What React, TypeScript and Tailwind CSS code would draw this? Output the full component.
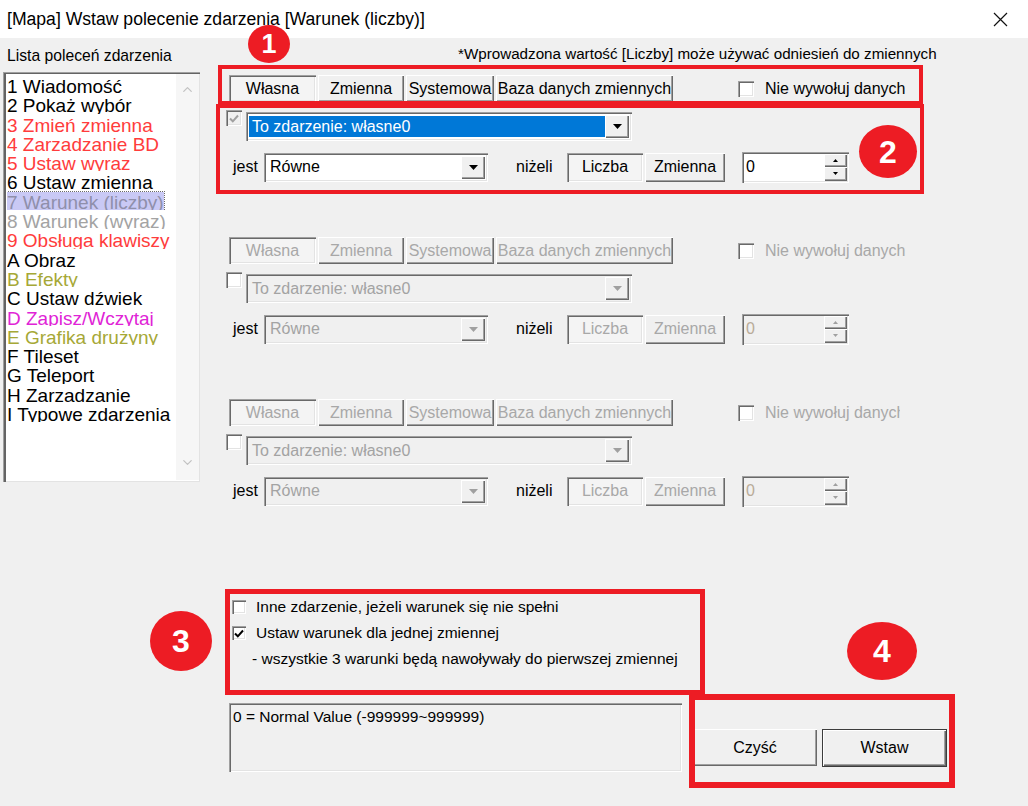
import { ChevronDown, ChevronUp } from 'lucide-react';

const raised =
  'bg-[#f0f0f0] shadow-[inset_1px_1px_0_#ffffff,inset_-1px_-1px_0_#696969,inset_-2px_-2px_0_#a0a0a0]';
const sunken =
  'shadow-[inset_1px_1px_0_#a0a0a0,inset_2px_2px_0_#696969,inset_-1px_-1px_0_#ffffff,inset_-2px_-2px_0_#e3e3e3]';

const commands = [
  { label: '1 Wiadomość', color: 'text-black' },
  { label: '2 Pokaż wybór', color: 'text-black' },
  { label: '3 Zmień zmienna', color: 'text-[#ff3c3c]' },
  { label: '4 Zarzadzanie BD', color: 'text-[#ff3c3c]' },
  { label: '5 Ustaw wyraz', color: 'text-[#ff3c3c]' },
  { label: '6 Ustaw zmienna', color: 'text-black' },
  { label: '7 Warunek (liczby)', color: 'text-[#8f8fab]', selected: true },
  { label: '8 Warunek (wyraz)', color: 'text-[#a3a3a3]' },
  { label: '9 Obsługa klawiszy', color: 'text-[#ff3c3c]' },
  { label: 'A Obraz', color: 'text-black' },
  { label: 'B Efekty', color: 'text-[#a6a836]' },
  { label: 'C Ustaw dźwiek', color: 'text-black' },
  { label: 'D Zapisz/Wczytaj', color: 'text-[#e024d6]' },
  { label: 'E Grafika drużyny', color: 'text-[#a6a836]' },
  { label: 'F Tileset', color: 'text-black' },
  { label: 'G Teleport', color: 'text-black' },
  { label: 'H Zarzadzanie', color: 'text-black' },
  { label: 'I Typowe zdarzenia', color: 'text-black' },
];

function Tri({ disabled, up, w = 9, h = 5 }: { disabled?: boolean; up?: boolean; w?: number; h?: number }) {
  return (
    <svg width={w} height={h} viewBox={`0 0 ${w} ${h}`}>
      <path
        d={up ? `M0 ${h}H${w}L${w / 2} 0z` : `M0 0H${w}L${w / 2} ${h}z`}
        fill={disabled ? '#a0a0a0' : '#000'}
      />
    </svg>
  );
}

function Check({ checked, disabled, size = 'w-[16px] h-[16px]' }: { checked?: boolean; disabled?: boolean; size?: string }) {
  return (
    <div
      className={`flex shrink-0 items-center justify-center ${size} ${sunken} ${
        disabled && checked ? 'bg-[#f0f0f0]' : 'bg-white'
      }`}
    >
      {checked && (
        <svg width="10" height="9" viewBox="0 0 10 9">
          <path d="M1 4.5L3.8 7.3L9 1.5" fill="none" stroke={disabled ? '#a0a0a0' : '#000'} strokeWidth="2" />
        </svg>
      )}
    </div>
  );
}

function Tab({ label, w, active, disabled }: { label: string; w: string; active?: boolean; disabled?: boolean }) {
  return (
    <div
      className={`flex h-[27px] items-center justify-center whitespace-nowrap ${w} ${
        active ? `bg-[#f4f4f4] ${sunken}` : raised
      } ${disabled ? 'text-[#a8a8a8]' : 'text-black'}`}
    >
      {label}
    </div>
  );
}

function Combo({ w, text, disabled, selected }: { w: string; text: string; disabled?: boolean; selected?: boolean }) {
  return (
    <div className={`flex h-[29px] p-[3px] ${w} ${sunken} ${disabled ? 'bg-[#f0f0f0]' : 'bg-white'}`}>
      <div
        className={`my-[1px] flex flex-1 items-center pl-[3px] whitespace-nowrap ${
          selected ? 'bg-[#0078d7] text-white' : disabled ? 'text-[#a3a3a3]' : 'text-black'
        }`}
      >
        {text}
      </div>
      <div className={`flex w-[24px] items-center justify-center ${raised}`}>
        <Tri disabled={disabled} />
      </div>
    </div>
  );
}

function Spin({ disabled }: { disabled?: boolean }) {
  return (
    <div className={`flex h-[31px] w-[107px] p-[2px] ${sunken} ${disabled ? 'bg-[#f0f0f0]' : 'bg-white'}`}>
      <div className={`flex flex-1 items-center pl-[2px] ${disabled ? 'text-[#b9ab98]' : 'text-black'}`}>0</div>
      <div className="flex w-[23px] flex-col">
        <div className={`flex flex-1 items-center justify-center ${raised}`}>
          <Tri up w={5} h={3} disabled={disabled} />
        </div>
        <div className={`flex flex-1 items-center justify-center ${raised}`}>
          <Tri w={5} h={3} disabled={disabled} />
        </div>
      </div>
    </div>
  );
}

function ConditionGroup({ disabled, clipLabel }: { disabled?: boolean; clipLabel?: boolean }) {
  const gray = disabled ? 'text-[#a8a8a8]' : 'text-black';
  return (
    <div className="h-[162px]">
      <div className="flex h-[27px] items-center">
        <div className="ml-[3px] flex gap-[2px]">
          <Tab label="Własna" w="w-[87px]" active disabled={disabled} />
          <Tab label="Zmienna" w="w-[86px]" disabled={disabled} />
          <Tab label="Systemowa" w="w-[88px]" disabled={disabled} />
          <Tab label="Baza danych zmiennych" w="w-[177px]" disabled={disabled} />
        </div>
        <div className="ml-[65px] flex items-center gap-[11px]">
          <Check />
          <span className={`whitespace-nowrap ${gray} ${clipLabel ? 'w-[135px] overflow-hidden' : ''}`}>
            Nie wywołuj danych
          </span>
        </div>
      </div>

      <div className="mt-[8px] flex items-start">
        <Check checked={!disabled} disabled />
        <div className="mt-[2px] ml-[4px]">
          <Combo w="w-[386px]" text="To zdarzenie: własne0" disabled={disabled} selected={!disabled} />
        </div>
      </div>

      <div className="mt-[11px] flex h-[30px] items-center">
        <span className="w-[38px] pl-[7px]">jest</span>
        <Combo w="w-[224px]" text="Równe" disabled={disabled} />
        <span className="w-[79px] pl-[28px]">niżeli</span>
        <div className={`flex h-[29px] w-[76px] items-center justify-center bg-[#f4f4f4] ${sunken} ${gray}`}>Liczba</div>
        <div className={`ml-[2px] flex h-[29px] w-[80px] items-center justify-center ${raised} ${gray}`}>Zmienna</div>
        <div className="ml-[17px]">
          <Spin disabled={disabled} />
        </div>
      </div>
    </div>
  );
}

function Badge({ n, pos }: { n: string; pos: string }) {
  return (
    <div
      className={`absolute flex items-center justify-center rounded-[50%] bg-[#ed1c24] font-bold text-white ${pos}`}
    >
      {n}
    </div>
  );
}

export default function App() {
  return (
    <div className="relative h-[806px] w-[1028px] overflow-hidden bg-[#f0f0f0] font-['Liberation_Sans',Arial,sans-serif] text-[16px] text-black">
      <div className="flex h-[38px] items-center justify-between bg-white pl-[7px] pr-[20px]">
        <span className="text-[17.6px]">[Mapa] Wstaw polecenie zdarzenia [Warunek (liczby)]</span>
        <svg width="15" height="15" viewBox="0 0 15 15">
          <path d="M1 1L14 14M14 1L1 14" stroke="#111" strokeWidth="1.2" />
        </svg>
      </div>

      <div className="flex">
        <div className="w-[226px] pl-[3px]">
          <div className="mt-[8px] pl-[4px] text-[15.7px] leading-[19px]">Lista poleceń zdarzenia</div>
          <div className="mt-[7px] flex h-[410px] w-[197px] bg-white shadow-[inset_1px_1px_0_#a0a0a0,inset_3px_2px_0_#646464,inset_-1px_-1px_0_#e3e3e3]">
            <div className="flex-1 overflow-hidden pt-[3px] pl-[4px]">
              {commands.map((c) => (
                <div
                  key={c.label}
                  className={`h-[19.3px] overflow-hidden whitespace-nowrap text-[19px] leading-[23.4px] ${c.color}`}
                >
                  {c.selected ? (
                    <span className="bg-[#c9c9f5] outline-1 outline-dotted outline-[#6a6a6a]">{c.label}</span>
                  ) : (
                    c.label
                  )}
                </div>
              ))}
            </div>
            <div className="my-[2px] mr-[1px] flex w-[23px] flex-col items-center justify-between bg-[#f6f6f6] pt-[8px] pb-[10px]">
              <ChevronUp size={15} color="#c2c2c2" strokeWidth={2} />
              <ChevronDown size={15} color="#c2c2c2" strokeWidth={2} />
            </div>
          </div>
        </div>

        <div className="flex-1">
          <div className="mt-[6px] ml-[232px] text-[15.2px] leading-[19px] whitespace-nowrap">
            *Wprowadzona wartość [Liczby] może używać odniesień do zmiennych
          </div>
          <div className="mt-[12px]">
            <ConditionGroup />
            <ConditionGroup disabled />
            <ConditionGroup disabled clipLabel />
          </div>

          <div className="mt-[33px] text-[15.5px]">
            <div className="flex h-[26px] items-center gap-[10px] pl-[6px]">
              <Check size="w-[14px] h-[14px]" />
              <span>Inne zdarzenie, jeżeli warunek się nie spełni</span>
            </div>
            <div className="flex h-[26px] items-center gap-[10px] pl-[6px]">
              <Check checked size="w-[14px] h-[14px]" />
              <span>Ustaw warunek dla jednej zmiennej</span>
            </div>
            <div className="flex h-[25px] items-center pl-[26px]">
              - wszystkie 3 warunki będą nawoływały do pierwszej zmiennej
            </div>
          </div>

          <div className="mt-[32px] flex items-start">
            <div className={`ml-[3px] h-[69px] w-[453px] pt-[2px] pl-[4px] text-[15.5px] ${sunken}`}>
              0 = Normal Value (-999999~999999)
            </div>
            <div className={`mt-[26px] ml-[11px] flex h-[37px] w-[124px] items-center justify-center ${raised}`}>
              Czyść
            </div>
            <div
              className={`mt-[26px] ml-[5px] flex h-[38px] w-[125px] items-center justify-center border border-[#3c3c3c] ${raised}`}
            >
              Wstaw
            </div>
          </div>
        </div>
      </div>

      <div className="absolute top-[65px] left-[218px] h-[40px] w-[705px] border-4 border-[#ed1c24]" />
      <div className="absolute top-[104px] left-[216px] h-[90px] w-[708px] border-4 border-[#ed1c24]" />
      <div className="absolute top-[589px] left-[225px] h-[106px] w-[480px] border-[5px] border-[#ed1c24]" />
      <div className="absolute top-[694px] left-[689px] h-[94px] w-[266px] border-[6px] border-[#ed1c24]" />

      <Badge n="1" pos="top-[25px] left-[248px] h-[38px] w-[42px] text-[27px]" />
      <Badge n="2" pos="top-[125px] left-[859px] h-[53px] w-[58px] text-[32px]" />
      <Badge n="3" pos="top-[611px] left-[150px] h-[60px] w-[62px] text-[32px]" />
      <Badge n="4" pos="top-[622px] left-[847px] h-[58px] w-[70px] text-[32px]" />
    </div>
  );
}
